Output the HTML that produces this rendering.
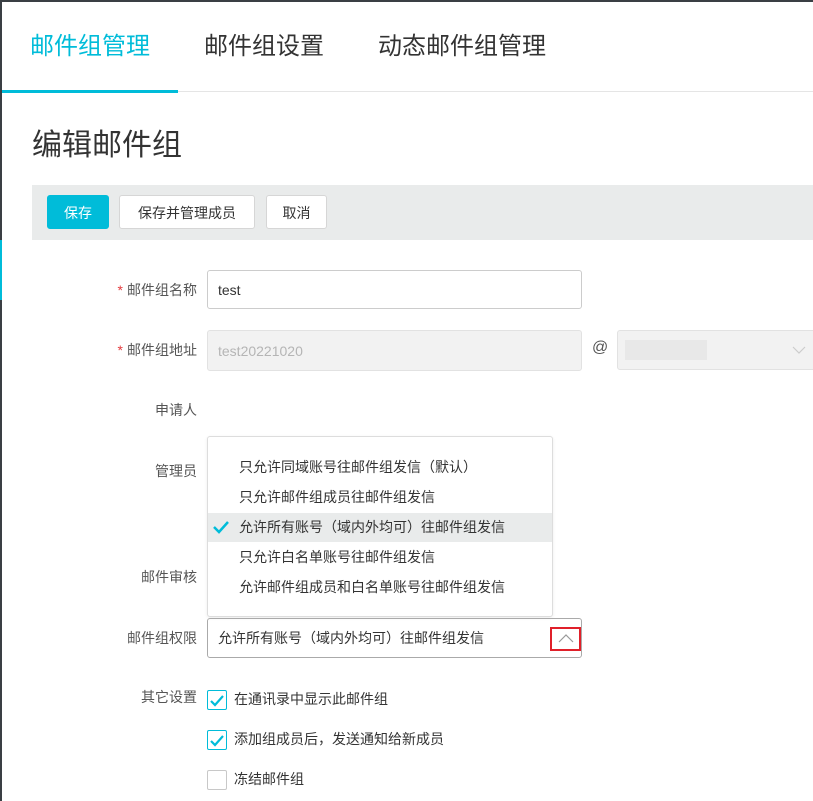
<!DOCTYPE html>
<html><head><meta charset="utf-8"><style>
body{margin:0;width:813px;height:801px;overflow:hidden;background:#fff;font-family:"Liberation Sans","Noto Sans CJK SC",sans-serif;position:relative}
.a{position:absolute;white-space:nowrap}
.lbl{position:absolute;right:616px;font-size:14px;color:#555;line-height:20px}
.star{color:#e4393c;margin-right:4px}
.btn{position:absolute;top:195px;height:34px;border:1px solid #d6d6d6;border-radius:3px;background:#fff;font-size:14px;color:#333;line-height:34px;text-align:center;box-sizing:border-box}
.inp{position:absolute;box-sizing:border-box;border:1px solid #ccc;border-radius:3px;font-size:14px;line-height:20px}
.cb{position:absolute;left:207px;width:20px;height:20px;box-sizing:border-box;border:1px solid #c8c8c8;border-radius:2px;background:#fff}
.cb.on{border-color:#00bcd9}
.ct{position:absolute;left:234px;font-size:14px;color:#333;line-height:20px}
.it{position:absolute;left:31px;font-size:14px;color:#333;line-height:20px}
</style></head><body>
<div class="a" style="left:0;top:0;width:813px;height:2px;background:#3a3f44"></div>
<div class="a" style="left:0;top:0;width:2px;height:801px;background:#3a3f44"></div>
<div class="a" style="left:0;top:240px;width:2px;height:60px;background:#00bcd9"></div>
<div class="a" style="left:30px;top:31px;font-size:24px;color:#00bcd9;line-height:32px">邮件组管理</div>
<div class="a" style="left:204px;top:31px;font-size:24px;color:#333;line-height:32px">邮件组设置</div>
<div class="a" style="left:378px;top:31px;font-size:24px;color:#333;line-height:32px">动态邮件组管理</div>
<div class="a" style="left:2px;top:91px;width:811px;height:1px;background:#e5e5e5"></div>
<div class="a" style="left:2px;top:90px;width:176px;height:3px;background:#00bcd9"></div>
<div class="a" style="left:32px;top:126px;font-size:30px;color:#333;line-height:40px">编辑邮件组</div>
<div class="a" style="left:32px;top:185px;width:781px;height:55px;background:#e9ebeb"></div>
<div class="btn" style="left:47px;width:62px;background:#00bcd9;border-color:#00bcd9;color:#fff">保存</div>
<div class="btn" style="left:119px;width:136px">保存并管理成员</div>
<div class="btn" style="left:266px;width:61px">取消</div>

<div class="lbl" style="top:280px"><span class="star">*</span>邮件组名称</div>
<div class="inp" style="left:207px;top:270px;width:375px;height:39px;padding:9px 10px;color:#333">test</div>
<div class="lbl" style="top:340px"><span class="star">*</span>邮件组地址</div>
<div class="inp" style="left:207px;top:330px;width:375px;height:41px;padding:10px 10px;color:#b5b5b5;background:#f2f2f2;border-color:#e2e2e2">test20221020</div>
<div class="a" style="left:592px;top:339px;font-size:16px;color:#555">@</div>
<div class="inp" style="left:617px;top:330px;width:200px;height:40px;background:#f2f2f2;border-color:#e2e2e2"></div>
<div class="a" style="left:625px;top:340px;width:82px;height:20px;background:#e8e8e8"></div>
<svg class="a" style="left:792px;top:345px" width="14" height="10"><path d="M1 2 L7 8 L13 2" fill="none" stroke="#ccc" stroke-width="1.2"/></svg>
<div class="lbl" style="top:400px">申请人</div>
<div class="lbl" style="top:461px">管理员</div>
<div class="lbl" style="top:567px">邮件审核</div>
<div class="lbl" style="top:628px">邮件组权限</div>
<div class="lbl" style="top:687px">其它设置</div>

<div class="a" style="left:207px;top:436px;width:346px;height:181px;border:1px solid #ddd;border-radius:3px;background:#fff;box-sizing:border-box;box-shadow:0 1px 3px rgba(0,0,0,.08)">
<div class="it" style="top:20px">只允许同域账号往邮件组发信（默认）</div>
<div class="it" style="top:50px">只允许邮件组成员往邮件组发信</div>
<div class="a" style="left:0;top:76px;width:344px;height:29px;background:#e9ebeb"></div>
<svg class="a" style="left:4px;top:82px" width="18" height="16"><path d="M2 8 L7 13 L16 3" fill="none" stroke="#00bcd9" stroke-width="2.5"/></svg>
<div class="it" style="top:80px">允许所有账号（域内外均可）往邮件组发信</div>
<div class="it" style="top:110px">只允许白名单账号往邮件组发信</div>
<div class="it" style="top:140px">允许邮件组成员和白名单账号往邮件组发信</div>
</div>
<div class="inp" style="left:207px;top:618px;width:375px;height:40px;padding:9px 10px;color:#333;border-color:#aaa">允许所有账号（域内外均可）往邮件组发信</div>
<div class="a" style="left:550px;top:627px;width:31px;height:24px;border:2px solid #e0202a;box-sizing:border-box"></div>
<svg class="a" style="left:558px;top:633px" width="16" height="10"><path d="M1 9 L8 2 L15 9" fill="none" stroke="#999" stroke-width="1.2"/></svg>

<div class="cb on" style="top:690px"><svg width="18" height="18"><path d="M3 10 L7 14 L15 5" fill="none" stroke="#00bcd9" stroke-width="2.2"/></svg></div>
<div class="ct" style="top:689px">在通讯录中显示此邮件组</div>
<div class="cb on" style="top:730px"><svg width="18" height="18"><path d="M3 10 L7 14 L15 5" fill="none" stroke="#00bcd9" stroke-width="2.2"/></svg></div>
<div class="ct" style="top:729px">添加组成员后，发送通知给新成员</div>
<div class="cb" style="top:770px"></div>
<div class="ct" style="top:769px">冻结邮件组</div>
</body></html>
